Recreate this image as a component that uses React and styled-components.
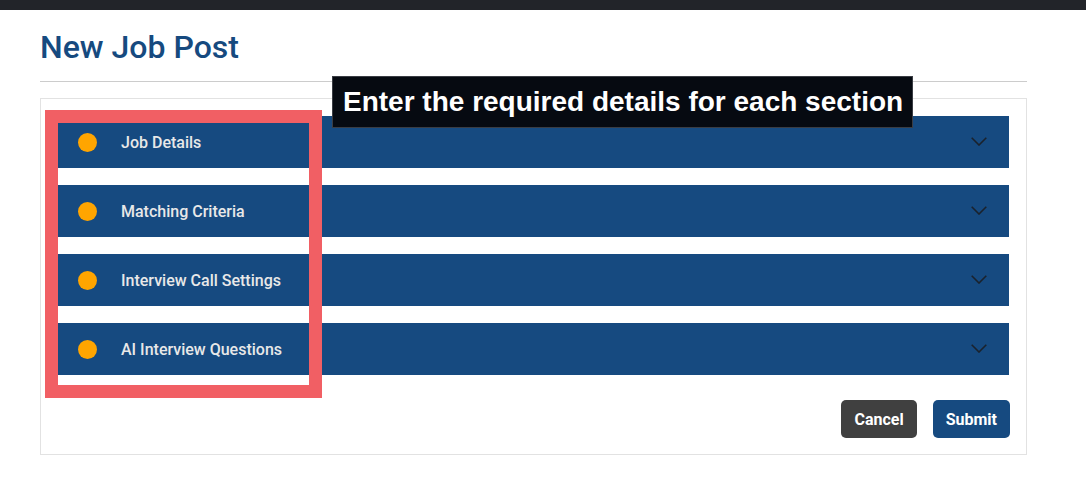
import React from 'react';
import styled, { createGlobalStyle } from 'styled-components';

const GlobalStyle = createGlobalStyle`
    * {
        box-sizing: border-box;
    }
    body {
        margin: 0;
        background: #ffffff;
        font-family: Roboto, "Noto Sans", Arial, sans-serif;
    }
`;

const TopBar = styled.div`
    height: 10px;
    background: #222429;
`;

const Page = styled.main`
    position: relative;
    width: 987px;
    margin-left: 40px;
    padding-top: 21px;
`;

const Title = styled.h1`
    margin: 0;
    font-size: 32px;
    font-weight: 500;
    line-height: 32px;
    color: #164a7f;
`;

const Divider = styled.hr`
    margin: 18px 0 16px;
    border: 0;
    border-top: 1px solid #cccccc;
`;

const Card = styled.section`
    border: 1px solid #e2e2e2;
    padding: 17px 17px 16px 17px;
`;

const Sections = styled.div`
    display: flex;
    flex-direction: column;
    gap: 17px;
`;

const SectionHeader = styled.div`
    display: flex;
    align-items: center;
    height: 52px;
    padding: 0 22px 0 20px;
    background: #164a80;
`;

const Dot = styled.span`
    width: 19px;
    height: 19px;
    border-radius: 50%;
    background: #ffa500;
    flex-shrink: 0;
`;

const SectionTitle = styled.span`
    flex: 1;
    margin-left: 24px;
    font-size: 16px;
    font-weight: 500;
    color: #e8e8e8;
`;

const Chevron = styled.svg`
    width: 16px;
    height: 9px;
    margin-bottom: 2px;
`;

const Actions = styled.div`
    display: flex;
    justify-content: flex-end;
    gap: 16px;
    margin-top: 25px;
    margin-right: -1px;
`;

const Button = styled.button`
    height: 38px;
    padding: 0 13px;
    border: 0;
    border-radius: 5px;
    font-family: Roboto, Arial, sans-serif;
    font-size: 16px;
    font-weight: 700;
    color: #ffffff;
    background: ${p => (p.$variant === 'primary' ? '#164a80' : '#404040')};
`;

const Highlight = styled.div`
    position: absolute;
    left: 5px;
    top: 100px;
    width: 277px;
    height: 288px;
    border: 13px solid #f15f64;
    pointer-events: none;
`;

const Tooltip = styled.div`
    position: absolute;
    left: 292px;
    top: 66px;
    width: 581px;
    height: 52px;
    display: flex;
    align-items: center;
    padding: 0 0 0 10px;
    background: #060a11;
    border: 1px solid #3a3d44;
    font-family: "Liberation Sans", Arial, sans-serif;
    font-size: 28px;
    font-weight: 700;
    color: #ffffff;
    white-space: nowrap;
`;

const sections = [
    'Job Details',
    'Matching Criteria',
    'Interview Call Settings',
    'AI Interview Questions',
];

const App = () => {
    return (
        <>
            <GlobalStyle />
            <TopBar />
            <Page>
                <Title>New Job Post</Title>
                <Divider />
                <Card>
                    <Sections>
                        {sections.map(name => (
                            <SectionHeader key={name}>
                                <Dot />
                                <SectionTitle>{name}</SectionTitle>
                                <Chevron viewBox="0 0 16 9" fill="none">
                                    <path
                                        d="M0.7 0.7 L8 8 L15.3 0.7"
                                        stroke="#1a222c"
                                        strokeWidth="1.6"
                                    />
                                </Chevron>
                            </SectionHeader>
                        ))}
                    </Sections>
                    <Actions>
                        <Button>Cancel</Button>
                        <Button $variant="primary">Submit</Button>
                    </Actions>
                </Card>
                <Highlight />
                <Tooltip>Enter the required details for each section</Tooltip>
            </Page>
        </>
    );
};

export default App;
